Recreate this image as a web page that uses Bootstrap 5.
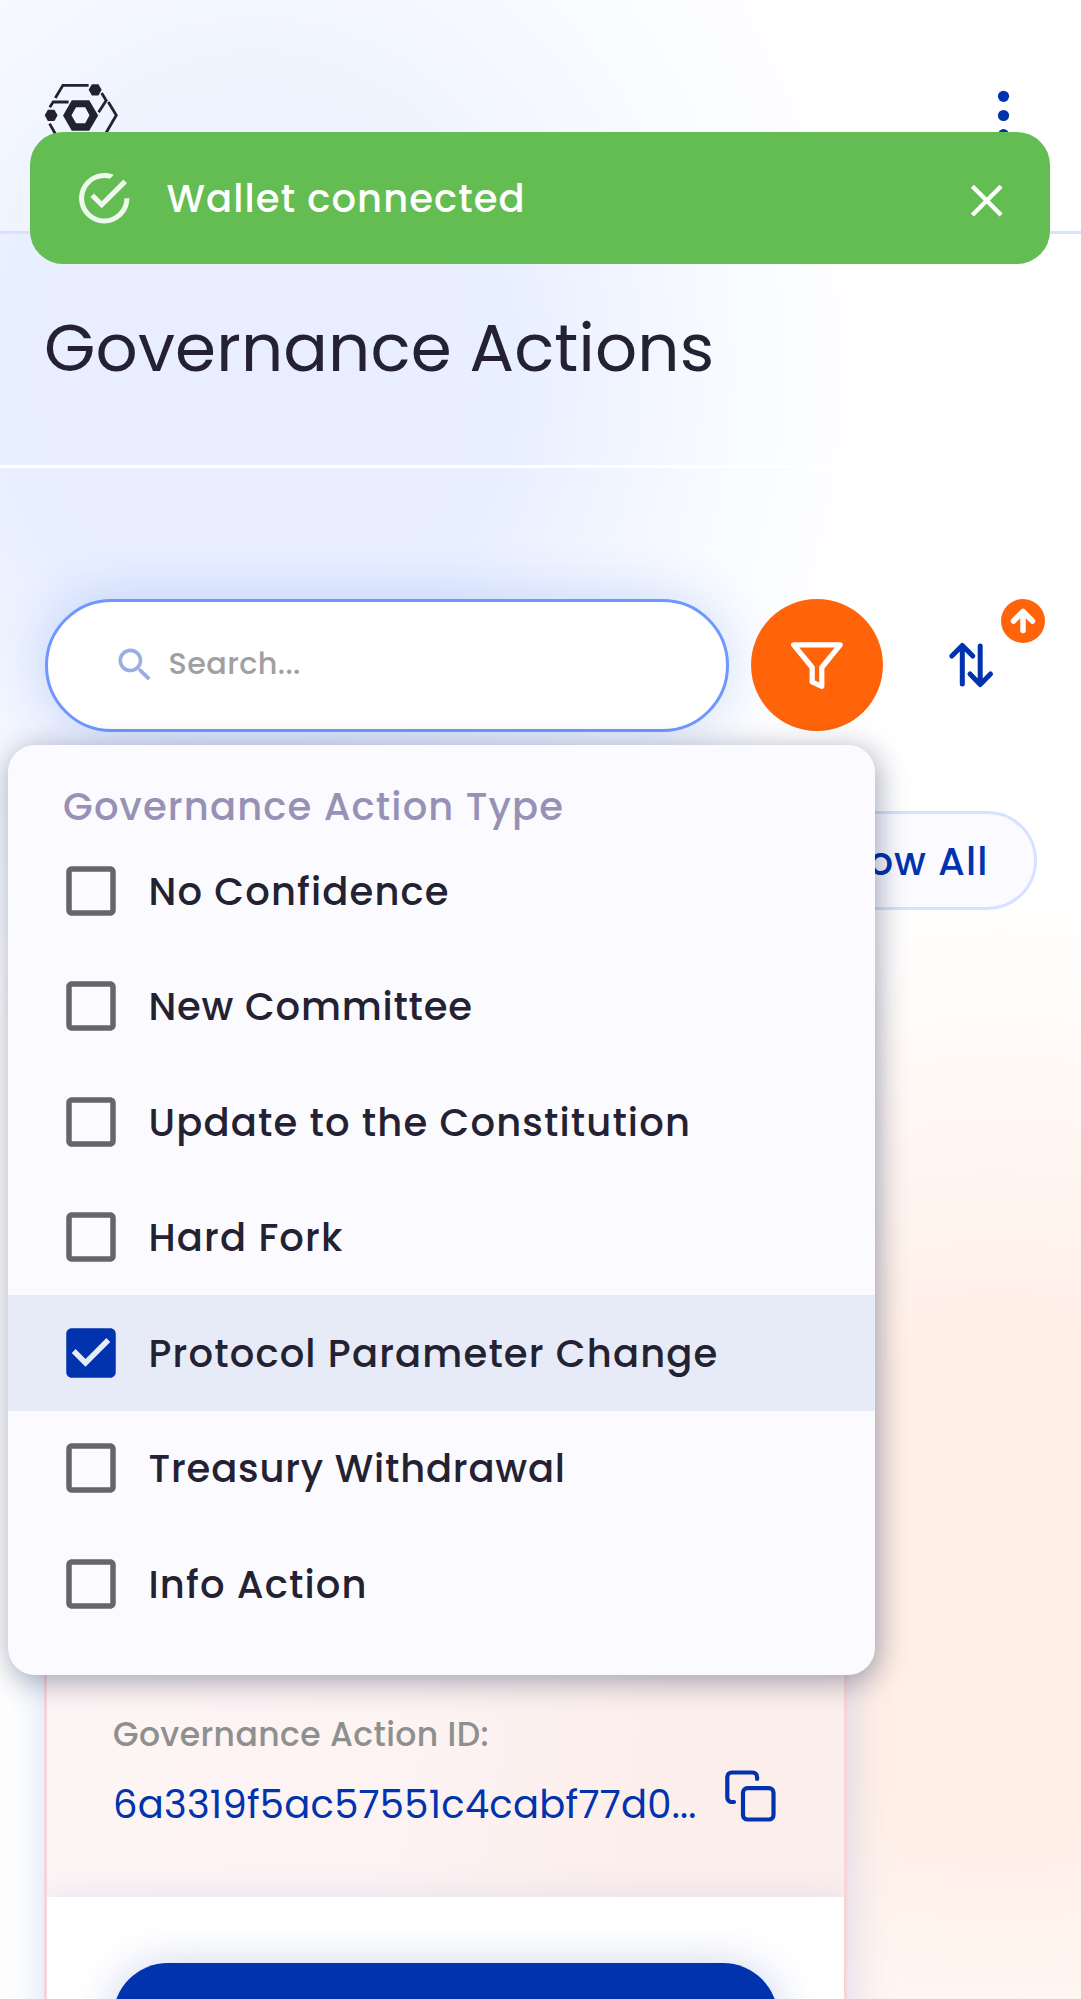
<!DOCTYPE html>
<html lang="en">
<head>
<meta charset="utf-8">
<meta name="viewport" content="width=device-width, initial-scale=1">
<title>Governance Actions</title>
<link rel="stylesheet" href="https://cdn.jsdelivr.net/npm/bootstrap@5.3.0/dist/css/bootstrap.min.css">
<script src="https://cdn.jsdelivr.net/npm/bootstrap@5.3.0/dist/js/bootstrap.bundle.min.js"></script>
<style>
  :root { --ink: #242232; --brand: #0033ad; --accent: #ff640a; --line: #d6e2ff; --panel: #fbfbff; }
  body {
    font-family: Poppins, Inter, sans-serif;
    color: var(--ink);
    height: 1999px;
    overflow: hidden;
    background:
      radial-gradient(ellipse 620px 700px at 255px 370px, #e8eeff 0%, #e8efff 42%, #f1f5ff 60%, #f9fbff 78%, rgba(255,255,255,0) 100%),
      radial-gradient(ellipse 900px 700px at 1000px 1580px, #ffefe6 0%, #ffefe6 32%, #fff6f2 62%, #fffdfb 86%, rgba(255,255,255,0) 100%),
      #fff;
  }
  .topbar { height: 234px; padding: 0 60px 0 44px; border-bottom: 3px solid var(--line); background: rgba(255,255,255,.3); }
  .page-title { height: 233.5px; padding: 0 44px 2px; border-bottom: 3px solid #fff; }
  .page-title h1 { font-size: 66px; font-weight: 400; line-height: 80px; letter-spacing: .15px; }
  .tools { padding: 131.5px 44.5px 0; gap: 22px; }
  .search-box { width: 684.5px; height: 132.5px; border: 3px solid #6e98ff; border-radius: 68px; background: #fff; padding-left: 65px; box-shadow: 0 0 56px rgba(0,70,220,.18); }
  .search-box input { font-size: 30.25px; font-weight: 500; letter-spacing: .4px; color: var(--ink); padding: 0 0 3px 12px; }
  .search-box input::placeholder { color: #a0a0a0; opacity: 1; }
  .round-btn { width: 132px; height: 132px; }
  .btn-filter { background: var(--accent); }
  .sort-badge { width: 44px; height: 44px; right: -8px; top: 0; background: var(--accent); }
  .pill-row { padding: 79px 44.5px 0; }
  .pill { height: 99px; padding: 3px 45px 0; border: 3px solid var(--line); border-radius: 50px; background: var(--panel); color: var(--brand); font-size: 38.5px; font-weight: 500; letter-spacing: 1.1px; }
  .ga-card { margin: 60px 0 0 44px; width: 803px; height: 1180px; border: 3px solid #f6d5d8; box-shadow: 0 11px 41px rgba(70,110,220,.22); background: linear-gradient(100deg, #fdf5f6 0%, #fdf3f3 50%, #fceeeb 75%, #fceeeb 100%); }
  .ga-info { height: 924px; padding: 0 66px 65px; }
  .ga-label { font-size: 33px; font-weight: 500; line-height: 40px; letter-spacing: .4px; color: #8e908e; margin-bottom: 22px; }
  .ga-id { font-size: 38.5px; line-height: 55px; letter-spacing: .25px; color: var(--brand); white-space: nowrap; width: 604px; }
  .ga-foot { background: #fff; padding: 66px; box-shadow: 0 0 32px rgba(80,120,220,.14); clip-path: inset(-33px 0 0 0); }
  .btn-vote { height: 110px; border-radius: 55px; background: var(--brand); box-shadow: 0 3px 44px rgba(0,51,173,.22); }
  .toast-bar { left: 30px; top: 132px; width: 1020px; height: 132px; border-radius: 33px; background: #64bd52; padding: 0 41px 0 44px; color: #fff; font-size: 38.5px; font-weight: 500; letter-spacing: 1.1px; z-index: 20; }
  .toast-bar .msg { padding: 2px 0 0 32px; }
  .filter-menu { left: 8px; top: 745px; width: 866.5px; height: 930px; border-radius: 27px; background: var(--panel); box-shadow: 2.75px 5.5px 30px rgba(0,18,61,.37); font-size: 38.5px; font-weight: 500; letter-spacing: 1.15px; z-index: 10; padding-top: 33px; }
  .menu-title { height: 55px; line-height: 57px; padding-left: 55px; color: #9792b5; }
  .opt { height: 115.5px; padding-left: 50px; }
  .opt.picked { background: #e6ebf7; }
  .opt svg { margin-right: 24.5px; }
  .opt span { padding-top: 2px; }
  .tight { letter-spacing: .8px; }
</style>
</head>
<body>
<svg class="d-none"><defs><path id="box" d="M19 5v14H5V5h14m0-2H5c-1.100 0-2 .9-2 2v14c0 1.100.9 2 2 2h14c1.100 0 2-.9 2-2V5c0-1.100-.9-2-2-2z"/></defs></svg>
<div class="position-relative h-100 overflow-hidden">
  <header class="topbar d-flex justify-content-between">
    <svg width="74" height="62" viewBox="44 84 74 62" style="margin-top:84px" fill="none" stroke="#242232" stroke-width="2.8">
      <path d="M55.300 98L62.900 85.400H88.600M101.600 93L106.200 100.400L98.600 112.300M49.800 107.200L53.200 102H68.600M49.600 123.600L61 144H99.500L116.300 115.300L108.300 102"/>
      <path d="M91.900 84.200H98.400L101.700 89.800L98.400 95.500H91.900L88.600 89.800ZM47.900 109.800H54.400L57.600 115.300L54.400 121H47.900L44.700 115.300Z" fill="#242232" stroke="none"/>
      <path fill-rule="evenodd" d="M71.800 100.300H89.200L98.200 115.500L89.200 130.800H71.800L63 115.500ZM76 107.300L71.500 115.300L76 123.200H85.200L89.500 115.300L85.200 107.300Z" fill="#242232" stroke="none"/>
    </svg>
    <svg width="35" height="62" viewBox="986 84 35 62" style="margin-top:84px" fill="#0033ad"><circle cx="1003.500" cy="96.300" r="5.600"/><circle cx="1003.500" cy="115.500" r="5.600"/><circle cx="1003.500" cy="134.700" r="5.600"/></svg>
  </header>

  <main>
    <div class="page-title d-flex align-items-center"><h1 class="m-0">Governance Actions</h1></div>

    <div class="tools d-flex">
      <div class="search-box d-flex align-items-center">
        <svg width="44" height="44" viewBox="0 0 24 24" fill="#9aaee0"><path d="M15.500 14h-.79l-.28-.27C15.410 12.590 16 11.110 16 9.500 16 5.910 13.090 3 9.500 3S3 5.910 3 9.500 5.910 16 9.500 16c1.610 0 3.090-.59 4.230-1.570l.27.28v.79l5 4.990L20.490 19l-4.990-5zm-6 0C7.010 14 5 11.990 5 9.500S7.010 5 9.500 5 14 7.010 14 9.500 11.990 14 9.500 14z"/></svg>
        <input class="form-control border-0 bg-transparent shadow-none w-75" type="text" placeholder="Search...">
      </div>
      <button class="round-btn btn-filter btn border-0 rounded-circle p-0 d-flex align-items-center justify-content-center" aria-label="Filter">
        <svg width="56" height="56" viewBox="789 637 56 56" fill="none" stroke="#fff" stroke-width="5.200" stroke-linejoin="round"><path d="M793.700 644.800H840.200L821.800 667.500V686.300L812.200 682V667.500Z"/></svg>
      </button>
      <button class="round-btn btn border-0 p-0 position-relative d-flex align-items-center justify-content-center" aria-label="Sort">
        <svg width="60" height="60" viewBox="940.500 635.500 60 60" fill="none" stroke="#0033ad" stroke-width="5" stroke-linecap="round" stroke-linejoin="round"><path d="M961.800 684.500V646.500M951.300 656.500L961.800 646L972.300 656.500M979.700 646.500V684.500M969.500 674.500L979.700 685L990 674.500"/></svg>
        <span class="sort-badge position-absolute rounded-circle d-flex align-items-center justify-content-center">
          <svg width="32" height="32" viewBox="0 0 32 32" fill="none" stroke="#fff" stroke-width="5.500" stroke-linecap="round" stroke-linejoin="round"><path d="M16 25.500V7M6.500 16L16 6.500L25.500 16"/></svg>
        </span>
      </button>
    </div>

    <div class="pill-row d-flex justify-content-end"><button class="pill">Show All</button></div>

    <article class="ga-card d-flex flex-column">
      <div class="ga-info flex-shrink-0 d-flex flex-column justify-content-end">
        <div class="ga-label">Governance Action ID:</div>
        <div class="d-flex">
          <div class="ga-id flex-shrink-0">6a3319f5ac57551c4cabf77d0...</div>
          <svg class="flex-shrink-0" width="66" height="55" viewBox="717.500 1777.500 66 55" overflow="visible" fill="none" stroke="#0033ad" stroke-width="4.200" stroke-linecap="round"><rect x="743.500" y="1788.700" width="30.500" height="31.300" rx="4.500"/><path d="M757.600 1779.500V1777.500A4.500 4.500 0 0 0 753.100 1773H732.300A4.500 4.500 0 0 0 727.800 1777.500V1798A4.500 4.500 0 0 0 732.300 1802.500H734.500"/></svg>
        </div>
      </div>
      <div class="ga-foot flex-grow-1"><button class="btn-vote w-100 border-0 d-block" aria-label="View details"></button></div>
    </article>
  </main>

  <div class="toast-bar position-absolute d-flex align-items-center" role="alert">
    <svg width="60.500" height="60.500" viewBox="0 0 24 24" fill="#eff8ed"><path d="M20,12A8,8 0 0,1 12,20A8,8 0 0,1 4,12A8,8 0 0,1 12,4C12.760,4 13.500,4.110 14.200,4.310L15.770,2.740C14.610,2.260 13.340,2 12,2A10,10 0 0,0 2,12A10,10 0 0,0 12,22A10,10 0 0,0 22,12M7.910,10.080L6.500,11.500L11,16L21,6L19.590,4.580L11,13.170L7.910,10.080Z"/></svg>
    <span class="msg flex-grow-1">Wallet connected</span>
    <svg width="44" height="44" viewBox="965.500 178 44 44" stroke="#fff" stroke-width="4.400"><path d="M972.900 188.200L1001.600 217M1001.600 188.200L972.900 217"/></svg>
  </div>

  <div class="filter-menu position-absolute">
    <div class="menu-title">Governance Action Type</div>
    <div class="opt d-flex align-items-center"><svg width="66" height="66" viewBox="0 0 24 24" fill="#666"><use href="#box"/></svg><span>No Confidence</span></div>
    <div class="opt d-flex align-items-center"><svg width="66" height="66" viewBox="0 0 24 24" fill="#666"><use href="#box"/></svg><span class="tight">New Committee</span></div>
    <div class="opt d-flex align-items-center"><svg width="66" height="66" viewBox="0 0 24 24" fill="#666"><use href="#box"/></svg><span>Update to the Constitution</span></div>
    <div class="opt d-flex align-items-center"><svg width="66" height="66" viewBox="0 0 24 24" fill="#666"><use href="#box"/></svg><span>Hard Fork</span></div>
    <div class="opt picked d-flex align-items-center"><svg width="66" height="66" viewBox="0 0 24 24" fill="#0033ad"><path d="M19 3H5c-1.110 0-2 .9-2 2v14c0 1.100.89 2 2 2h14c1.110 0 2-.9 2-2V5c0-1.100-.89-2-2-2zm-9 14l-5-5 1.410-1.410L10 14.170l7.590-7.590L19 8l-9 9z"/></svg><span>Protocol Parameter Change</span></div>
    <div class="opt d-flex align-items-center"><svg width="66" height="66" viewBox="0 0 24 24" fill="#666"><use href="#box"/></svg><span class="tight">Treasury Withdrawal</span></div>
    <div class="opt d-flex align-items-center"><svg width="66" height="66" viewBox="0 0 24 24" fill="#666"><use href="#box"/></svg><span>Info Action</span></div>
  </div>
</div>
</body>
</html>
